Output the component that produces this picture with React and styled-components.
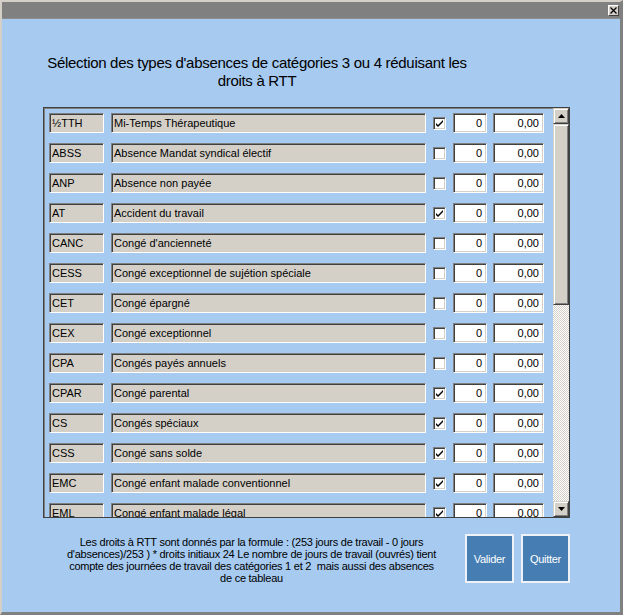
import React from 'react';
import styled, { createGlobalStyle } from 'styled-components';

const GlobalStyle = createGlobalStyle`
  * { box-sizing: border-box; }
  body {
    margin: 0;
    background: #d4d0c8;
    font-family: "Liberation Sans", Arial, sans-serif;
  }
`

const Window = styled.div`
  width: 623px;
  height: 615px;
  display: flex;
  flex-direction: column;
  border-top: 2px solid #d4d0c8;
  border-left: 2px solid #d4d0c8;
  border-right: 3px solid #808080;
  border-bottom: 3px solid #808080;
  background: #a6caf0;
`

const TitleBar = styled.div`
  height: 17px;
  background: #808080;
  display: flex;
  justify-content: flex-end;
  align-items: flex-start;
  padding: 3px 1px 0 0;
  border-bottom: 1px solid #8e8e8e;
`

const CloseButton = styled.div`
  width: 11px;
  height: 11px;
  background: #d4d0c8;
  border-top: 1px solid #fff;
  border-left: 1px solid #fff;
  border-right: 1px solid #404040;
  border-bottom: 1px solid #404040;
  display: flex;
  align-items: center;
  justify-content: center;
`

const Body = styled.div`
  flex: 1;
  display: flex;
  flex-direction: column;
  padding: 35px 0 0 41px;
`

const Heading = styled.h1`
  width: 428px;
  margin: 0;
  font-size: 15px;
  line-height: 18px;
  font-weight: normal;
  text-align: center;
  color: #000;
  letter-spacing: -0.3px;
`

const ListBox = styled.div`
  width: 527px;
  height: 411px;
  margin-top: 17px;
  display: flex;
  border: 1px solid #404040;
  box-shadow: inset 1px 1px 0 #808080;
  overflow: hidden;
`

const Rows = styled.div`
  flex: 1;
  display: flex;
  flex-direction: column;
  gap: 10px;
  padding: 5px 0 0 5px;
`

const Row = styled.div`
  display: flex;
  align-items: center;
  height: 20px;
  flex-shrink: 0;
`

const Field = styled.div`
  width: ${p => p.$w}px;
  height: 20px;
  margin-right: ${p => p.$gap ?? 7}px;
  background: ${p => (p.$white ? '#fff' : '#d4d0c8')};
  border-top: 1px solid #808080;
  border-left: 1px solid #808080;
  border-right: 1px solid #fff;
  border-bottom: 1px solid #fff;
  box-shadow: inset 1px 1px 0 #404040, inset -1px -1px 0 #d4d0c8;
  font-size: 11px;
  line-height: 18px;
  color: #000;
  padding: 0 ${p => (p.$white ? '4px' : '2px')} 0 2px;
  text-align: ${p => (p.$white ? 'right' : 'left')};
  white-space: nowrap;
  overflow: hidden;
`

const CheckBox = styled.div`
  width: 13px;
  height: 13px;
  margin-right: 7px;
  background: #fff;
  border-top: 1px solid #808080;
  border-left: 1px solid #808080;
  border-right: 1px solid #fff;
  border-bottom: 1px solid #fff;
  box-shadow: inset 1px 1px 0 #404040, inset -1px -1px 0 #d4d0c8;
  display: flex;
  align-items: center;
  justify-content: center;
`

const ScrollBar = styled.div`
  width: 16px;
  display: flex;
  flex-direction: column;
  background: repeating-conic-gradient(#d4d0c8 0 25%, #fff 0 50%) 0 0 / 2px 2px;
`

const ScrollButton = styled.div`
  height: 16px;
  background: #d4d0c8;
  border-top: 1px solid #d4d0c8;
  border-left: 1px solid #d4d0c8;
  border-right: 1px solid #404040;
  border-bottom: 1px solid #404040;
  box-shadow: inset 1px 1px 0 #fff, inset -1px -1px 0 #808080;
  display: flex;
  align-items: center;
  justify-content: center;
  margin-top: ${p => (p.$bottom ? 'auto' : '0')};
`

const Thumb = styled(ScrollButton)`
  height: 181px;
`

const Footer = styled.div`
  display: flex;
  align-items: flex-start;
  margin-top: 16px;
`

const Note = styled.p`
  width: 417px;
  margin: 0;
  padding-top: 2px;
  font-size: 11px;
  line-height: 12px;
  text-align: center;
  color: #000;
  letter-spacing: -0.25px;
  white-space: nowrap;
`

const Buttons = styled.div`
  display: flex;
  gap: 7px;
  margin-left: 5px;
`

const ActionButton = styled.button`
  width: 49px;
  height: 49px;
  padding: 0;
  background: #467eb4;
  border: 2px solid #eef2f7;
  color: #fff;
  font-family: "Liberation Sans", Arial, sans-serif;
  font-size: 11px;
  letter-spacing: -0.3px;
`

const rows = [
  ['½TTH', 'Mi-Temps Thérapeutique', true],
  ['ABSS', 'Absence Mandat syndical électif', false],
  ['ANP', 'Absence non payée', false],
  ['AT', 'Accident du travail', true],
  ['CANC', "Congé d'ancienneté", false],
  ['CESS', 'Congé exceptionnel de sujétion spéciale', false],
  ['CET', 'Congé épargné', false],
  ['CEX', 'Congé exceptionnel', false],
  ['CPA', 'Congés payés annuels', false],
  ['CPAR', 'Congé parental', true],
  ['CS', 'Congés spéciaux', true],
  ['CSS', 'Congé sans solde', true],
  ['EMC', 'Congé enfant malade conventionnel', true],
  ['EML', 'Congé enfant malade légal', true],
]

const Check = () => (
  <svg width="9" height="9" viewBox="0 0 9 9">
    <path d="M1 4 L3 6 L8 1 L8 3 L3 8 L1 6 Z" fill="#000" />
  </svg>
)

const Arrow = ({ down }) => (
  <svg width="7" height="4" viewBox="0 0 7 4">
    <path d={down ? 'M0 0 H7 L3.5 4 Z' : 'M0 4 H7 L3.5 0 Z'} fill="#000" />
  </svg>
)

const App = () => {
  return <>
    <GlobalStyle />
    <Window>
      <TitleBar>
        <CloseButton>
          <svg width="7" height="7" viewBox="0 0 7 7">
            <path d="M0.5 0.5 L6.5 6.5 M6.5 0.5 L0.5 6.5" stroke="#000" strokeWidth="1.3" />
          </svg>
        </CloseButton>
      </TitleBar>
      <Body>
        <Heading>
          Sélection des types d'absences de catégories 3 ou 4 réduisant les<br />droits à RTT
        </Heading>
        <ListBox>
          <Rows>
            {rows.map(([code, label, checked]) => (
              <Row key={code}>
                <Field $w={55}>{code}</Field>
                <Field $w={315}>{label}</Field>
                <CheckBox>{checked && <Check />}</CheckBox>
                <Field $w={34} $white $gap={6}>0</Field>
                <Field $w={51} $white $gap={0}>0,00</Field>
              </Row>
            ))}
          </Rows>
          <ScrollBar>
            <ScrollButton><Arrow /></ScrollButton>
            <Thumb />
            <ScrollButton $bottom><Arrow down /></ScrollButton>
          </ScrollBar>
        </ListBox>
        <Footer>
          <Note>
            Les droits à RTT sont donnés par la formule : (253 jours de travail - 0 jours<br />
            d'absences)/253 ) * droits initiaux 24 Le nombre de jours de travail (ouvrés) tient<br />
            compte des journées de travail des catégories 1 et 2&nbsp; mais aussi des absences<br />
            de ce tableau
          </Note>
          <Buttons>
            <ActionButton>Valider</ActionButton>
            <ActionButton>Quitter</ActionButton>
          </Buttons>
        </Footer>
      </Body>
    </Window>
  </>
}

export default App;
